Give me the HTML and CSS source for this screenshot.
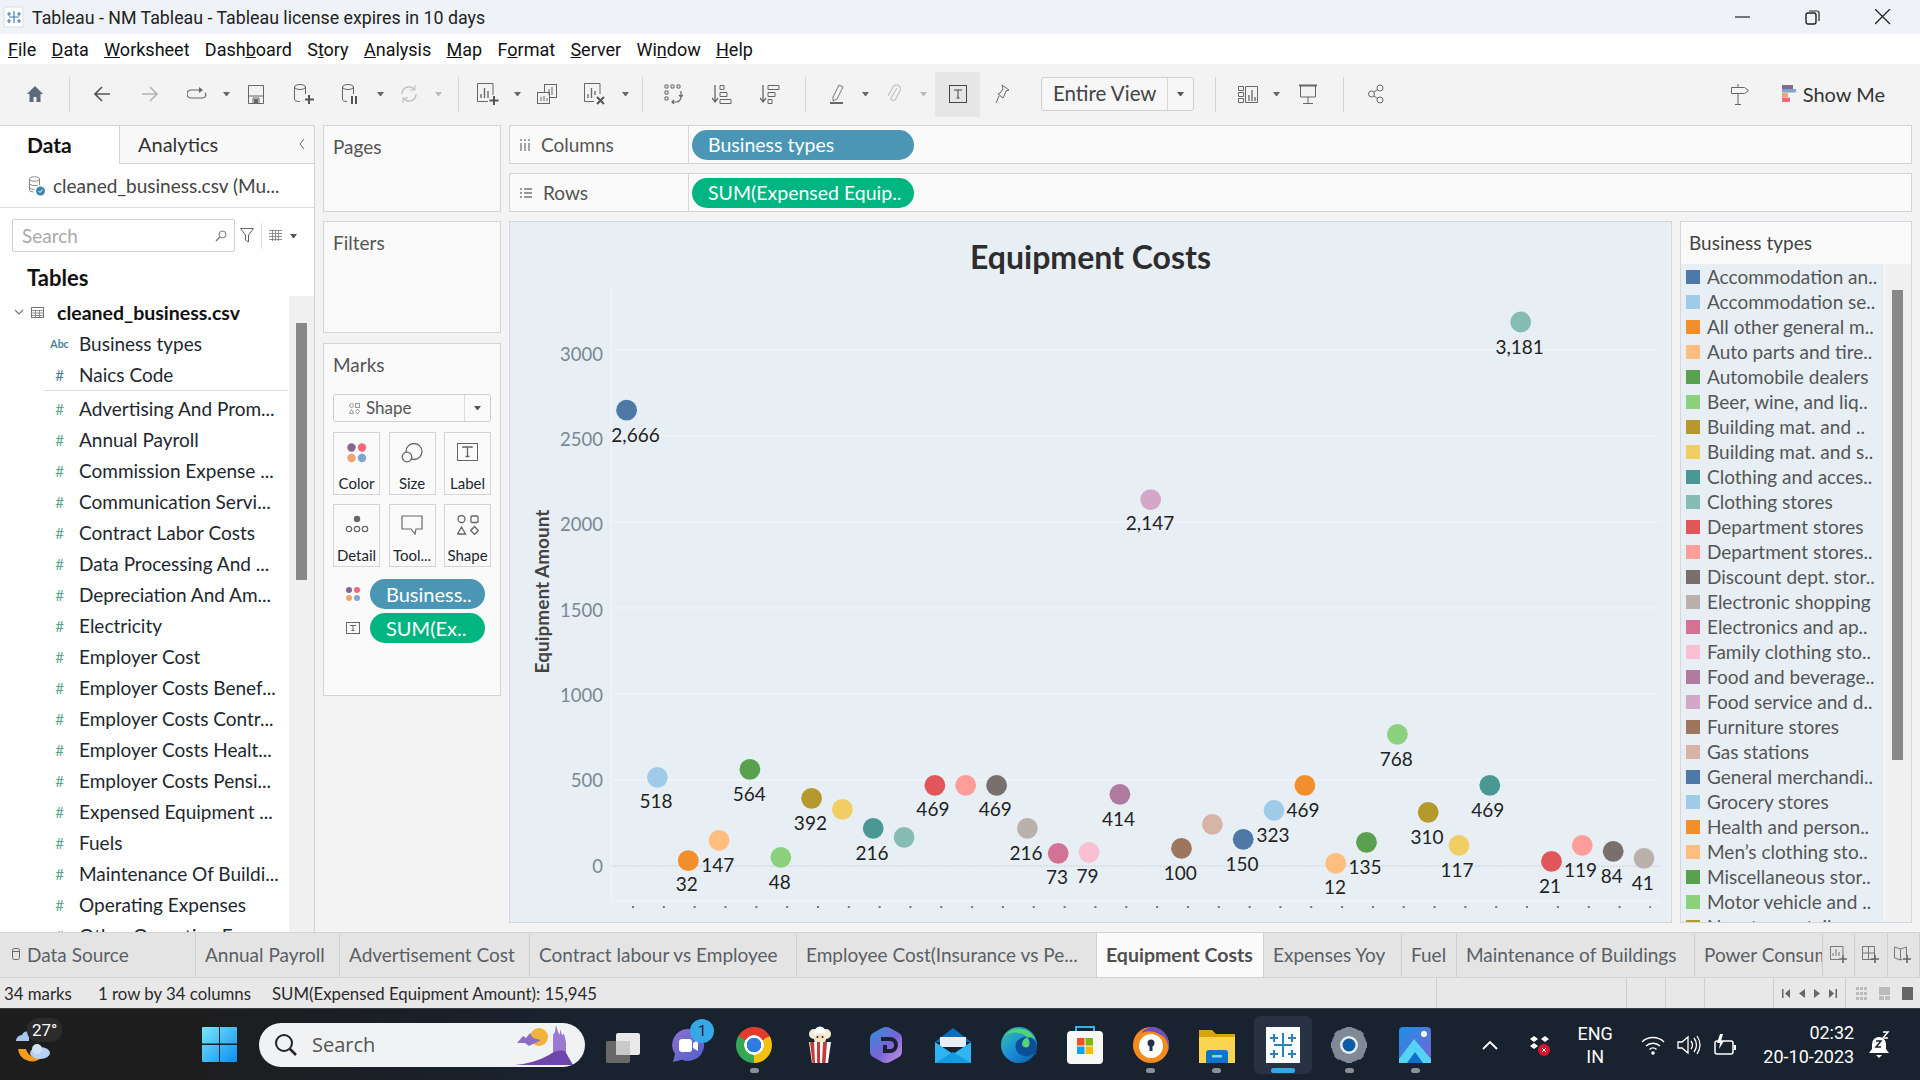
FILE: index.html
```html
<!DOCTYPE html>
<html lang="en">

<head>
    <meta charset="UTF-8">
    <title>Tableau - NM Tableau</title>
    <link rel="stylesheet" href="styles.css">
</head>

<body>
    <!-- window title -->
    <header class="titlebar">
        <svg class="app-logo" width="22" height="22" viewBox="0 0 22 22"><rect x="1" y="1" width="19" height="20" fill="#fff" stroke="#d8dde2"/><path d="M11 5v12M6 11h10M6 6v4M4 8h4M16 6v4M14 8h4M6 13v4M4 15h4M16 13v4M14 15h4" stroke="#3f7fb5" stroke-width="1.2" fill="none"/></svg>
        <span class="title-text">Tableau - NM Tableau - Tableau license expires in 10 days</span>
        <div class="win-controls">
            <svg width="16" height="16" viewBox="0 0 16 16"><path d="M0 8h15" stroke="#222" stroke-width="1.2"/></svg>
            <svg width="16" height="16" viewBox="0 0 16 16"><rect x="1" y="4" width="10" height="11" rx="2" fill="none" stroke="#222" stroke-width="1.4"/><path d="M4 2h8a2 2 0 0 1 2 2v8" fill="none" stroke="#222" stroke-width="1.2"/></svg>
            <svg width="16" height="16" viewBox="0 0 16 16"><path d="M0 0l15 15M15 0L0 15" stroke="#222" stroke-width="1.3"/></svg>
        </div>
    </header>

    <nav class="menubar">
        <span><u>F</u>ile</span>
        <span><u>D</u>ata</span>
        <span><u>W</u>orksheet</span>
        <span>Dash<u>b</u>oard</span>
        <span>S<u>t</u>ory</span>
        <span><u>A</u>nalysis</span>
        <span><u>M</u>ap</span>
        <span>F<u>o</u>rmat</span>
        <span><u>S</u>erver</span>
        <span>Wi<u>n</u>dow</span>
        <span><u>H</u>elp</span>
    </nav>

    <div class="toolbar">
        <span class="ti first"><svg width="18" height="18" viewBox="0 0 18 18"><path d="M9 1L1 9h2.500v8h4v-5h3v5h4V9H17z" fill="#5c6b78"/></svg></span>
        <i class="sep s1"></i>
        <span class="ti"><svg width="18" height="18" viewBox="0 0 18 18"><path d="M17 9H2M9 2L2 9l7 7" fill="none" stroke="#555" stroke-width="1.7"/></svg></span>
        <span class="ti"><svg width="18" height="18" viewBox="0 0 18 18"><path d="M1 9h15M9 2l7 7-7 7" fill="none" stroke="#b5b5b5" stroke-width="1.7"/></svg></span>
        <span class="ti cut"><svg width="20" height="14" viewBox="0 0 20 14"><path d="M14 3H4a3 3 0 0 0 0 8h12a3 3 0 0 0 2-5" fill="none" stroke="#666" stroke-width="1.2"/><path d="M12 0l4 3-4 3z" fill="#666"/></svg></span>
        <b class="caret"></b>
        <span class="ti"><svg width="16" height="19" viewBox="0 0 16 19"><path d="M.5.5h15v18H.5zM.5 11h15M5 18v-5h6v5" fill="none" stroke="#666"/><rect x="6" y="14" width="4" height="4" fill="#666"/></svg></span>
        <span class="ti"><svg width="22" height="22" viewBox="0 0 22 22"><ellipse cx="7" cy="4" rx="5.5" ry="2.5" fill="none" stroke="#666"/><path d="M1.5 4v12q0 2.500 5.500 2.500M12.500 4v7" fill="none" stroke="#666"/><path d="M16 12v9M12 16.500h9" stroke="#555" stroke-width="2"/></svg></span>
        <span class="ti cut"><svg width="20" height="22" viewBox="0 0 20 22"><ellipse cx="7" cy="4" rx="5.5" ry="2.5" fill="none" stroke="#666"/><path d="M1.5 4v12q0 2.500 4.500 2.500M12.500 4v7" fill="none" stroke="#666"/><path d="M11 13v8M15 13v8" stroke="#555" stroke-width="2"/></svg></span>
        <b class="caret"></b>
        <span class="ti cut"><svg width="18" height="18" viewBox="0 0 18 18"><path d="M2 9a7 7 0 0 1 12-5M16 9a7 7 0 0 1-12 5" fill="none" stroke="#bbb" stroke-width="1.3"/><path d="M15 0v5h-5M3 18v-5h5" fill="none" stroke="#bbb"/></svg></span>
        <b class="caret off"></b>
        <i class="sep s2"></i>
        <span class="ti cut"><svg width="22" height="22" viewBox="0 0 22 22"><path d="M16 12V.5H.5v18H11" fill="none" stroke="#666"/><path d="M4 15v-4M7.500 15V5M11 15V8" stroke="#666" stroke-width="1.3"/><path d="M17 13v9M12.500 17.500h9" stroke="#555" stroke-width="2"/></svg></span>
        <b class="caret"></b>
        <span class="ti"><svg width="20" height="20" viewBox="0 0 20 20"><rect x="7.5" y=".5" width="12" height="13" fill="none" stroke="#666"/><rect x=".5" y="8.5" width="12" height="11" fill="#f3f3f3" stroke="#666"/><path d="M12 11V5M15 11V3M4 17v-4M7 17v-5M10 17v-3" stroke="#666"/></svg></span>
        <span class="ti"><svg width="22" height="22" viewBox="0 0 22 22"><path d="M16 11V.5H.5v18H10" fill="none" stroke="#666"/><path d="M4 15v-4M7.500 15V5M11 12V8" stroke="#666" stroke-width="1.3"/><path d="M13 14l7 7M20 14l-7 7" stroke="#555" stroke-width="2"/></svg></span>
        <b class="caret"></b>
        <i class="sep s3"></i>
        <span class="ti"><svg width="20" height="20" viewBox="0 0 20 20"><path d="M1 1h3v3H1zM7 1h3v3H7zM13 1h3v3h-3zM1 7h3v3H1zM1 13h3v3H1z" fill="none" stroke="#666"/><path d="M17 7v6a5 5 0 0 1-5 5H8M15 11l2 2 2-2M10 16l-2 2 2 2" fill="none" stroke="#666" stroke-width="1.2"/></svg></span>
        <span class="ti"><svg width="20" height="20" viewBox="0 0 20 20"><path d="M3 1v17M0 14l3 4 3-4" fill="none" stroke="#666" stroke-width="1.3"/><path d="M8 1.500h4v4H8zM8 8.500h7v4H8zM8 15.500h11v4H8z" fill="none" stroke="#666"/></svg></span>
        <span class="ti"><svg width="20" height="20" viewBox="0 0 20 20"><path d="M3 1v17M0 14l3 4 3-4" fill="none" stroke="#666" stroke-width="1.3"/><path d="M8 1.500h11v4H8zM8 8.500h7v4H8zM8 15.500h4v4H8z" fill="none" stroke="#666"/></svg></span>
        <i class="sep s4"></i>
        <span class="ti narrow"><svg width="14" height="20" viewBox="0 0 14 20"><path d="M3 13L9 1l4 2-6 12-4 2z" fill="none" stroke="#777"/><rect y="18" width="13" height="2" fill="#666"/></svg></span>
        <b class="caret"></b>
        <span class="ti cut"><svg width="14" height="20" viewBox="0 0 14 20"><path d="M10 4L4 14a2.500 2.500 0 0 0 4 2l5-9a4 4 0 0 0-7-4L1 12" fill="none" stroke="#c2c2c2" stroke-width="1.2"/></svg></span>
        <b class="caret off"></b>
        <span class="ti active"><svg width="18" height="18" viewBox="0 0 18 18"><rect x=".5" y=".5" width="17" height="17" fill="none" stroke="#444"/><path d="M5 5h8M9 5v8M7.500 13h3" fill="none" stroke="#444"/></svg></span>
        <span class="ti pin"><svg width="15" height="20" viewBox="0 0 15 20"><path d="M7 1l7 5-3 1-2 5-1 2-5-4 2-1 3-4zM4 12l-3 7" fill="none" stroke="#666"/></svg></span>
        <div class="fit-select"><span>Entire View</span><b class="caret"></b></div>
        <i class="sep s5"></i>
        <span class="ti narrow"><svg width="20" height="17" viewBox="0 0 20 17"><path d="M.5.5h5v4h-5zM.5 6.500h5v4h-5zM.5 12.500h5v4h-5zM7.500.5h12v16h-12z" fill="none" stroke="#666"/><path d="M11 15V9M14 15V4M17 15v-4" stroke="#666" stroke-width="1.3"/></svg></span>
        <b class="caret"></b>
        <span class="ti present"><svg width="18" height="20" viewBox="0 0 18 20"><path d="M0 1.500h18" stroke="#666" stroke-width="2"/><path d="M1.500 2v11h15V2M9 13v6M4 19.500h10" fill="none" stroke="#666"/></svg></span>
        <i class="sep s6"></i>
        <span class="ti"><svg width="16" height="20" viewBox="0 0 16 20"><circle cx="3.5" cy="10" r="3" fill="none" stroke="#666"/><circle cx="12" cy="4" r="3" fill="none" stroke="#666"/><circle cx="12" cy="16" r="3" fill="none" stroke="#666"/><path d="M6 8l3.500-2.500M6 12l3.500 2.500" stroke="#666"/></svg></span>
        <span class="ti guide"><svg width="20" height="22" viewBox="0 0 20 22"><path d="M1.500 4.500h13l4 3-4 3h-13zM8 1v3M8 11v10M5 21.500h6" fill="none" stroke="#666"/></svg></span>
        <div class="show-me">
            <svg width="14" height="18" viewBox="0 0 14 18"><rect width="11" height="4" fill="#86688f"/><rect y="4" width="14" height="3.5" fill="#7ea6d2"/><rect y="8" width="6" height="4" fill="#f2a36f"/><rect y="12.5" width="8" height="4.5" fill="#f4687a"/></svg>
            <span>Show Me</span>
        </div>
    </div>

    <main class="workspace">
        <aside class="side">
            <div class="side-tabs">
                <span class="side-tab on">Data</span>
                <span class="side-tab">Analytics<svg class="collapse" width="6" height="10" viewBox="0 0 6 10"><path d="M5 0L1 5l4 5" fill="none" stroke="#666"/></svg></span>
            </div>
            <div class="source">
                <svg width="17" height="20" viewBox="0 0 17 20"><ellipse cx="6.5" cy="3" rx="5" ry="2.2" fill="none" stroke="#888"/><path d="M1.500 3v11q0 2 4 2M11.500 3v6M1.500 8q2 2 8 1.500M1.500 12q2 1.500 5 1.500" fill="none" stroke="#888"/><circle cx="12.5" cy="15" r="4.5" fill="#3c86ad"/><path d="M10.500 15l1.500 1.500 2.500-3" fill="none" stroke="#fff"/></svg>
                <span>cleaned_business.csv (Mu...</span>
            </div>
            <div class="search-row">
                <div class="search-box">
                    <span>Search</span>
                    <svg width="12" height="12" viewBox="0 0 12 12"><circle cx="7.5" cy="4.5" r="3.5" fill="none" stroke="#777"/><path d="M5 7l-4 4" stroke="#777" stroke-width="1.3"/></svg>
                </div>
                <svg class="funnel" width="14" height="15" viewBox="0 0 14 15"><path d="M.5.5h13L8.500 7v7l-3-2V7z" fill="none" stroke="#666"/></svg>
                <i class="mini-sep"></i>
                <svg width="13" height="11" viewBox="0 0 13 11"><path d="M0 .5h13M0 3.500h13M0 6.500h13M0 9.500h13M3.500 0v11M6.500 0v11M9.500 0v11" stroke="#777" stroke-width=".8" fill="none"/></svg>
                <b class="caret small"></b>
            </div>
            <h2 class="tables-head">Tables</h2>
            <div class="fields-wrap">
                <div class="fields">
                    <div class="table-row">
                        <svg width="10" height="6" viewBox="0 0 10 6"><path d="M1 1l4 4 4-4" fill="none" stroke="#777" stroke-width="1.2"/></svg>
                        <svg width="13" height="11" viewBox="0 0 13 11"><rect x=".5" y=".5" width="12" height="10" fill="none" stroke="#777"/><path d="M0 3.500h13M0 6h13M0 8.500h13M4.500 3v8M8.500 3v8" stroke="#777" stroke-width=".8"/></svg>
                        <span>cleaned_business.csv</span>
                    </div>
                    <div class="field dim"><em class="abc">Abc</em>Business types</div>
                    <div class="field dim"><em>#</em>Naics Code</div>
                    <hr class="field-sep">
                    <div class="field"><em>#</em>Advertising And Prom...</div>
                    <div class="field"><em>#</em>Annual Payroll</div>
                    <div class="field"><em>#</em>Commission Expense ...</div>
                    <div class="field"><em>#</em>Communication Servi...</div>
                    <div class="field"><em>#</em>Contract Labor Costs</div>
                    <div class="field"><em>#</em>Data Processing And ...</div>
                    <div class="field"><em>#</em>Depreciation And Am...</div>
                    <div class="field"><em>#</em>Electricity</div>
                    <div class="field"><em>#</em>Employer Cost</div>
                    <div class="field"><em>#</em>Employer Costs Benef...</div>
                    <div class="field"><em>#</em>Employer Costs Contr...</div>
                    <div class="field"><em>#</em>Employer Costs Healt...</div>
                    <div class="field"><em>#</em>Employer Costs Pensi...</div>
                    <div class="field"><em>#</em>Expensed Equipment ...</div>
                    <div class="field"><em>#</em>Fuels</div>
                    <div class="field"><em>#</em>Maintenance Of Buildi...</div>
                    <div class="field"><em>#</em>Operating Expenses</div>
                    <div class="field"><em>#</em>Other Operating E...</div>
                </div>
                <div class="track"><div class="thumb"></div></div>
            </div>
        </aside>

        <section class="cards">
            <div class="card pages"><h3>Pages</h3></div>
            <div class="card filters"><h3>Filters</h3></div>
            <div class="card marks">
                <h3>Marks</h3>
                <div class="mark-type">
                    <svg width="11" height="11" viewBox="0 0 11 11"><circle cx="2.5" cy="2.5" r="2" fill="none" stroke="#999"/><rect x="6.5" y=".5" width="4" height="4" fill="none" stroke="#999"/><path d="M2.500 6.500l2 4h-4zM8.500 6l2 2.500-2 2.500-2-2.500z" fill="none" stroke="#999"/></svg>
                    <span>Shape</span>
                    <b class="caret"></b>
                </div>
                <div class="mark-grid">
                    <div class="mark-btn">
                        <svg width="20" height="20" viewBox="0 0 20 20"><circle cx="4.5" cy="4.5" r="4.2" fill="#86688f"/><circle cx="15" cy="4.5" r="4.2" fill="#f4687a"/><circle cx="4.5" cy="15" r="4.2" fill="#f2a36f"/><circle cx="15" cy="15" r="4.2" fill="#7ea6d2"/></svg>
                        <span>Color</span>
                    </div>
                    <div class="mark-btn">
                        <svg width="22" height="20" viewBox="0 0 22 20"><circle cx="13" cy="8.5" r="8" fill="none" stroke="#666" stroke-width="1.3"/><circle cx="6" cy="14" r="4.8" fill="#fafafa" stroke="#666" stroke-width="1.3"/></svg>
                        <span>Size</span>
                    </div>
                    <div class="mark-btn">
                        <svg width="21" height="18" viewBox="0 0 21 18"><rect x=".5" y=".5" width="20" height="17" fill="none" stroke="#666"/><path d="M6 5V4h9v1M10.500 4v9M8.500 13.500h4" fill="none" stroke="#666" stroke-width="1.3"/></svg>
                        <span>Label</span>
                    </div>
                    <div class="mark-btn">
                        <svg width="24" height="20" viewBox="0 0 24 20"><circle cx="12" cy="4" r="3.2" fill="#666"/><circle cx="4" cy="14" r="2.7" fill="none" stroke="#666" stroke-width="1.2"/><circle cx="12" cy="14" r="2.7" fill="none" stroke="#666" stroke-width="1.2"/><circle cx="20" cy="14" r="2.7" fill="none" stroke="#666" stroke-width="1.2"/></svg>
                        <span>Detail</span>
                    </div>
                    <div class="mark-btn">
                        <svg width="22" height="20" viewBox="0 0 22 20"><path d="M1 1h20v13h-6l-1 5-4-5H1z" fill="none" stroke="#666" stroke-width="1.2"/></svg>
                        <span>Tool...</span>
                    </div>
                    <div class="mark-btn">
                        <svg width="22" height="20" viewBox="0 0 22 20"><circle cx="4.5" cy="4" r="3.5" fill="none" stroke="#666" stroke-width="1.3"/><rect x="14" y="1" width="7" height="6.5" rx="1" fill="none" stroke="#666" stroke-width="1.3"/><path d="M4.500 12l4 7h-8zM17.500 11.500l3.800 4-3.800 4-3.800-4z" fill="none" stroke="#666" stroke-width="1.3"/></svg>
                        <span>Shape</span>
                    </div>
                </div>
                <div class="mark-pill-row">
                    <svg width="14" height="14" viewBox="0 0 14 14"><circle cx="3" cy="3" r="3" fill="#86688f"/><circle cx="11" cy="3" r="3" fill="#f4687a"/><circle cx="3" cy="11" r="3" fill="#f2a36f"/><circle cx="11" cy="11" r="3" fill="#7ea6d2"/></svg>
                    <span class="pill blue">Business..</span>
                </div>
                <div class="mark-pill-row">
                    <svg width="14" height="12" viewBox="0 0 14 12"><rect x=".5" y=".5" width="13" height="11" fill="none" stroke="#666"/><path d="M4 3.500h6M7 3.500v5M5.500 8.500h3" fill="none" stroke="#666"/></svg>
                    <span class="pill green">SUM(Ex..</span>
                </div>
            </div>
        </section>

        <section class="stage">
            <div class="shelf">
                <div class="shelf-label"><svg width="10" height="12" viewBox="0 0 10 12"><path d="M1 0v2M5 0v2M9 0v2M1 4v8M5 4v8M9 4v8" stroke="#777" stroke-width="1.3"/></svg><span>Columns</span></div>
                <span class="pill blue wide">Business types</span>
            </div>
            <div class="shelf">
                <div class="shelf-label"><svg width="12" height="10" viewBox="0 0 12 10"><path d="M0 1h2M4 1h8M0 5h2M4 5h8M0 9h2M4 9h8" stroke="#777" stroke-width="1.3"/></svg><span>Rows</span></div>
                <span class="pill green wide">SUM(Expensed Equip..</span>
            </div>
            <div class="view-row">
                <div class="viz">
                    <svg class="chart" width="1163" height="702" viewBox="509 221 1163 702">
                        <text class="chart-title" x="1090.5" y="269" text-anchor="middle">Equipment Costs</text>

                        <path class="grid" d="M611.4 350H1660M611.4 436H1660M611.4 522H1660M611.4 608H1660M611.4 694H1660M611.4 780H1660M611.4 285V901H1660"/>
                        <path class="zero" d="M611.4 866H1660"/>
                        <line class="ticks" x1="611" y1="902.5" x2="1661" y2="902.5"/>
                        <line class="header-dots" x1="631" y1="907" x2="1651" y2="907"/>

                        <text class="axis" x="603" y="361" text-anchor="end">3000</text>
                        <text class="axis" x="603" y="446" text-anchor="end">2500</text>
                        <text class="axis" x="603" y="531" text-anchor="end">2000</text>
                        <text class="axis" x="603" y="617" text-anchor="end">1500</text>
                        <text class="axis" x="603" y="702" text-anchor="end">1000</text>
                        <text class="axis" x="603" y="787" text-anchor="end">500</text>
                        <text class="axis" x="603" y="873" text-anchor="end">0</text>
                        <text class="axis-title" transform="translate(549 591.5) rotate(-90)" text-anchor="middle">Equipment Amount</text>

                        <circle class="c0" cx="626.6" cy="410.2" r="10.4"/>
                        <circle class="c1" cx="657.4" cy="777.3" r="10.4"/>
                        <circle class="c2" cx="688.3" cy="860.7" r="10.4"/>
                        <circle class="c3" cx="719.1" cy="840.3" r="10.4"/>
                        <circle class="c4" cx="749.9" cy="769.3" r="10.4"/>
                        <circle class="c5" cx="780.8" cy="857.3" r="10.4"/>
                        <circle class="c6" cx="811.6" cy="798.3" r="10.4"/>
                        <circle class="c7" cx="842.4" cy="809.3" r="10.4"/>
                        <circle class="c8" cx="873.2" cy="828.3" r="10.4"/>
                        <circle class="c9" cx="904.1" cy="837.3" r="10.4"/>
                        <circle class="c10" cx="934.9" cy="785.3" r="10.4"/>
                        <circle class="c11" cx="965.7" cy="785.3" r="10.4"/>
                        <circle class="c12" cx="996.6" cy="785.3" r="10.4"/>
                        <circle class="c13" cx="1027.4" cy="828.3" r="10.4"/>
                        <circle class="c14" cx="1058.2" cy="853.3" r="10.4"/>
                        <circle class="c15" cx="1089.1" cy="852.3" r="10.4"/>
                        <circle class="c16" cx="1119.9" cy="794.3" r="10.4"/>
                        <circle class="c17" cx="1150.7" cy="499.6" r="10.4"/>
                        <circle class="c18" cx="1181.5" cy="848.3" r="10.4"/>
                        <circle class="c19" cx="1212.4" cy="824.3" r="10.4"/>
                        <circle class="c0" cx="1243.2" cy="839.3" r="10.4"/>
                        <circle class="c1" cx="1274" cy="810.3" r="10.4"/>
                        <circle class="c2" cx="1304.9" cy="785.3" r="10.4"/>
                        <circle class="c3" cx="1335.7" cy="863.3" r="10.4"/>
                        <circle class="c4" cx="1366.5" cy="842.3" r="10.4"/>
                        <circle class="c5" cx="1397.4" cy="734.3" r="10.4"/>
                        <circle class="c6" cx="1428.2" cy="812.3" r="10.4"/>
                        <circle class="c7" cx="1459" cy="845.3" r="10.4"/>
                        <circle class="c8" cx="1489.8" cy="785.3" r="10.4"/>
                        <circle class="c9" cx="1520.7" cy="322" r="10.4"/>
                        <circle class="c10" cx="1551.5" cy="861.3" r="10.4"/>
                        <circle class="c11" cx="1582.3" cy="845.3" r="10.4"/>
                        <circle class="c12" cx="1613.2" cy="851.3" r="10.4"/>
                        <circle class="c13" cx="1644" cy="858.3" r="10.4"/>

                        <g class="mark-labels" text-anchor="middle">
                            <text x="635.5" y="442">2,666</text>
                            <text x="656" y="808">518</text>
                            <text x="686.8" y="891">32</text>
                            <text x="717.8" y="872">147</text>
                            <text x="749.2" y="801">564</text>
                            <text x="779.8" y="889">48</text>
                            <text x="810.4" y="830">392</text>
                            <text x="872" y="860">216</text>
                            <text x="932.9" y="816">469</text>
                            <text x="995.3" y="816">469</text>
                            <text x="1026" y="860">216</text>
                            <text x="1056.9" y="884">73</text>
                            <text x="1087.5" y="883">79</text>
                            <text x="1118.5" y="826">414</text>
                            <text x="1150" y="530">2,147</text>
                            <text x="1180.3" y="880">100</text>
                            <text x="1242" y="871">150</text>
                            <text x="1273" y="842">323</text>
                            <text x="1303" y="817">469</text>
                            <text x="1335" y="894">12</text>
                            <text x="1365" y="874">135</text>
                            <text x="1396.3" y="766">768</text>
                            <text x="1427" y="844">310</text>
                            <text x="1457" y="877">117</text>
                            <text x="1487.7" y="817">469</text>
                            <text x="1519.6" y="354">3,181</text>
                            <text x="1549.9" y="893">21</text>
                            <text x="1580.6" y="877">119</text>
                            <text x="1611.7" y="883">84</text>
                            <text x="1642.7" y="890">41</text>
                        </g>
                    </svg>
                </div>
                <div class="legend">
                    <h3>Business types</h3>
                    <div class="legend-body">
                        <ul class="legend-list">
                            <li><i class="c0"></i>Accommodation an..</li>
                            <li><i class="c1"></i>Accommodation se..</li>
                            <li><i class="c2"></i>All other general m..</li>
                            <li><i class="c3"></i>Auto parts and tire..</li>
                            <li><i class="c4"></i>Automobile dealers</li>
                            <li><i class="c5"></i>Beer, wine, and liq..</li>
                            <li><i class="c6"></i>Building mat. and ..</li>
                            <li><i class="c7"></i>Building mat. and s..</li>
                            <li><i class="c8"></i>Clothing and acces..</li>
                            <li><i class="c9"></i>Clothing stores</li>
                            <li><i class="c10"></i>Department stores</li>
                            <li><i class="c11"></i>Department stores..</li>
                            <li><i class="c12"></i>Discount dept. stor..</li>
                            <li><i class="c13"></i>Electronic shopping</li>
                            <li><i class="c14"></i>Electronics and ap..</li>
                            <li><i class="c15"></i>Family clothing sto..</li>
                            <li><i class="c16"></i>Food and beverage..</li>
                            <li><i class="c17"></i>Food service and d..</li>
                            <li><i class="c18"></i>Furniture stores</li>
                            <li><i class="c19"></i>Gas stations</li>
                            <li><i class="c0"></i>General merchandi..</li>
                            <li><i class="c1"></i>Grocery stores</li>
                            <li><i class="c2"></i>Health and person..</li>
                            <li><i class="c3"></i>Men’s clothing sto..</li>
                            <li><i class="c4"></i>Miscellaneous stor..</li>
                            <li><i class="c5"></i>Motor vehicle and ..</li>
                            <li><i class="c6"></i>Nonstore retailers</li>
                        </ul>
                        <div class="legend-track"><div class="legend-thumb"></div></div>
                    </div>
                </div>
            </div>
        </section>
    </main>

    <div class="tabbar">
        <span class="tab ds"><svg width="8" height="12" viewBox="0 0 8 12"><rect x=".5" y=".5" width="7" height="11" rx="2" fill="none" stroke="#666"/><path d="M1 3.500h6" stroke="#666"/></svg>Data Source</span>
        <span class="tab t1">Annual Payroll</span>
        <span class="tab t2">Advertisement Cost</span>
        <span class="tab t3">Contract labour vs Employee</span>
        <span class="tab t4">Employee Cost(Insurance vs Pe...</span>
        <span class="tab t5 on">Equipment Costs</span>
        <span class="tab t6">Expenses Yoy</span>
        <span class="tab t7">Fuel</span>
        <span class="tab t8">Maintenance of Buildings</span>
        <span class="tab t9">Power Consumption</span>
        <span class="tab-add"><svg width="18" height="18" viewBox="0 0 18 18"><path d="M13 9V.5H.5v13H9M3 10V7M6 10V3M9 10V6" fill="none" stroke="#777"/><path d="M13 9v8M9 13h8" stroke="#666" stroke-width="1.6"/></svg></span>
        <span class="tab-add"><svg width="18" height="18" viewBox="0 0 18 18"><path d="M.5.5h12v13H.5zM.5 7h12M6.500.5v13" fill="none" stroke="#777"/><path d="M13 9v8M9 13h8" stroke="#666" stroke-width="1.6"/></svg></span>
        <span class="tab-add"><svg width="18" height="18" viewBox="0 0 18 18"><path d="M.5 1l6 2v11l-6-2zM6.500 3l6-2v9M6.500 14l2-.7" fill="none" stroke="#777"/><path d="M13 9v8M9 13h8" stroke="#666" stroke-width="1.6"/></svg></span>
    </div>

    <footer class="statusbar">
        <span class="st-marks">34 marks</span>
        <span class="st-dims">1 row by 34 columns</span>
        <span class="st-sum">SUM(Expensed Equipment Amount): 15,945</span>
        <i class="st-cell c-a"></i>
        <i class="st-cell c-b"></i>
        <i class="st-cell c-c"></i>
        <i class="st-cell c-d"></i>
        <i class="st-cell"></i>
        <div class="st-nav">
            <svg width="8" height="9" viewBox="0 0 8 9"><path d="M8 0v9L3 4.500zM0 0h1.500v9H0z" fill="#666"/></svg>
            <svg width="6" height="9" viewBox="0 0 6 9"><path d="M6 0v9L0 4.500z" fill="#666"/></svg>
            <svg width="6" height="9" viewBox="0 0 6 9"><path d="M0 0v9l6-4.500z" fill="#666"/></svg>
            <svg width="8" height="9" viewBox="0 0 8 9"><path d="M0 0v9l5-4.500zM6.500 0H8v9H6.500z" fill="#666"/></svg>
        </div>
        <i class="st-cell"></i>
        <div class="st-views">
            <svg width="11" height="13" viewBox="0 0 11 13"><path d="M0 0h3v3H0zM4 0h3v3H4zM8 0h3v3H8zM0 5h3v3H0zM4 5h3v3H4zM8 5h3v3H8zM0 10h3v3H0zM4 10h3v3H4zM8 10h3v3H8z" fill="#bbb"/></svg>
            <svg width="11" height="13" viewBox="0 0 11 13"><path d="M0 0h11v8H0zM0 9h5v4H0zM6 9h5v4H6z" fill="#bbb"/></svg>
            <svg width="11" height="13" viewBox="0 0 11 13"><rect width="11" height="13" fill="#666"/></svg>
        </div>
    </footer>

    <div class="taskbar">
        <div class="weather">
            <svg width="38" height="38" viewBox="0 0 38 38">
                <path d="M2 14a6 6 0 0 1 6-6q2-5 7-3v9z" fill="#a7c8f0"/>
                <path d="M4 22a14 14 0 0 0 24 8 12 12 0 0 1-16-8z" fill="#f59a1d"/>
                <ellipse cx="26" cy="26" rx="10" ry="6" fill="#b6d2f2"/>
                <circle cx="23" cy="22" r="5" fill="#cfe2f8"/>
            </svg>
            <span class="temp">27°</span>
        </div>
        <svg class="win-logo" width="35" height="35" viewBox="0 0 35 35">
            <defs><linearGradient id="winfill" x1="0" y1="0" x2="1" y2="1"><stop offset="0" stop-color="#7ae5fb"/><stop offset="1" stop-color="#0b8df0"/></linearGradient></defs>
            <path d="M1 0h16v16.500H0V1a1 1 0 0 1 1-1zM18 0h16a1 1 0 0 1 1 1v15.500H18zM0 18h17v17H1a1 1 0 0 1-1-1zM18 18h17v16a1 1 0 0 1-1 1H18z" fill="url(#winfill)"/>
        </svg>
        <div class="task-search">
            <svg width="24" height="24" viewBox="0 0 24 24"><circle cx="10" cy="10" r="8" fill="none" stroke="#222" stroke-width="2"/><path d="M16 16l6 6" stroke="#222" stroke-width="2.5"/></svg>
            <span>Search</span>
            <svg class="castle" width="60" height="44" viewBox="0 0 60 44">
                <circle cx="24" cy="14" r="9" fill="#f2b23e"/>
                <path d="M2 20l6-7 3 2 4-5 3 5 8 2-6 3-6 3-4-3z" fill="#8b6fc4"/>
                <path d="M38 30V12l2-3 1-7 2 7 2 3V6l2 6 2-1 2 8v12z" fill="#9a7ad0"/>
                <path d="M0 42q20-2 34-10 8-6 16-4l8 14z" fill="#6f46ad"/>
            </svg>
        </div>
        <div class="apps">
            <span class="app"><svg width="36" height="36" viewBox="0 0 36 36"><rect x="12" y="6" width="24" height="22" rx="2" fill="#e9e9e9"/><rect x="2" y="14" width="24" height="22" rx="2" fill="#6d6d6d" opacity=".95"/><rect x="12" y="14" width="14" height="14" fill="#c9c9c9"/></svg></span>
            <span class="app"><svg width="36" height="36" viewBox="0 0 36 36"><defs><linearGradient id="meet" x1="0" y1="0" x2="1" y2="1"><stop offset="0" stop-color="#8e72cf"/><stop offset="1" stop-color="#4d5fc9"/></linearGradient></defs><path d="M18 2a16 16 0 1 1-6 30.800L3 35l2-8A16 16 0 0 1 18 2z" fill="url(#meet)"/><rect x="9" y="12" width="13" height="13" rx="3" fill="#fff"/><path d="M23 16l5-3v11l-5-3z" fill="#fff"/></svg><b class="badge">1</b></span>
            <span class="app"><span class="chrome"></span><i class="dot"></i></span>
            <span class="app"><svg width="28" height="38" viewBox="0 0 28 38"><circle cx="8" cy="8" r="5" fill="#f5ecd8"/><circle cx="20" cy="8" r="5" fill="#f5ecd8"/><circle cx="14" cy="6" r="5.5" fill="#fff"/><circle cx="14" cy="13" r="6" fill="#f4e4c4"/><circle cx="11.5" cy="11" r="1" fill="#222"/><circle cx="16.5" cy="11" r="1" fill="#222"/><path d="M3 16h22l-3 21H6z" fill="#fff"/><path d="M4 16h4l1 21H6.500zM11 16h3v21h-3zM17 16h4l-1.500 21H16z" fill="#c73a3a"/></svg></span>
            <span class="app"><svg width="32" height="38" viewBox="0 0 32 38"><defs><linearGradient id="cop" x1="0" y1="0" x2="1" y2="1"><stop offset="0" stop-color="#2f8fd8"/><stop offset=".55" stop-color="#7a63d8"/><stop offset="1" stop-color="#c79be8"/></linearGradient></defs><path d="M12 2q4-2 8 0l9 5q3 2 3 6v12q0 4-3 6l-9 5q-4 2-8 0l-9-5q-3-2-3-6V13q0-4 3-6z" fill="url(#cop)"/><path d="M11 13h9a5 5 0 0 1 0 12h-5v-6" fill="none" stroke="#19222f" stroke-width="4"/></svg></span>
            <span class="app"><svg width="36" height="36" viewBox="0 0 36 36"><path d="M18 1L0 15h36z" fill="#0a6dc2"/><path d="M5 10h26v10H5z" fill="#e8eef5"/><path d="M0 15l18 12 18-12v21H0z" fill="#2fb6f2"/><path d="M0 36l18-11 18 11z" fill="#149ae0"/></svg></span>
            <span class="app"><svg width="36" height="36" viewBox="0 0 36 36"><defs><linearGradient id="edge" x1="0" y1="0" x2="1" y2="1"><stop offset="0" stop-color="#35c4a8"/><stop offset=".5" stop-color="#1a8fd8"/><stop offset="1" stop-color="#0c59a4"/></linearGradient></defs><circle cx="18" cy="18" r="18" fill="url(#edge)"/><path d="M36 19a11 10 0 0 0-21-3c-2 6 2 12 8 13a12 12 0 0 0 9-2l3 1" fill="#0c4f96"/><path d="M36 18A18 18 0 0 0 3 10q8-7 18-3c8 3 9 10 6 13-2 1-6 0-6-3a7 7 0 0 1 15 1z" fill="#55d56f"/></svg></span>
            <span class="app"><svg width="36" height="38" viewBox="0 0 36 38"><path d="M9 5V1h18v4" fill="none" stroke="#2cb5ea" stroke-width="2"/><rect y="5" width="36" height="33" rx="4" fill="#f7f7f7"/><rect x="10" y="12" width="7.5" height="7.5" fill="#f25022"/><rect x="18.5" y="12" width="7.5" height="7.5" fill="#7fba00"/><rect x="10" y="20.5" width="7.5" height="7.5" fill="#00a4ef"/><rect x="18.5" y="20.5" width="7.5" height="7.5" fill="#ffb900"/></svg></span>
            <span class="app"><svg width="36" height="36" viewBox="0 0 36 36"><circle cx="18" cy="18" r="18" fill="#f58a1f"/><path d="M18 0a18 18 0 0 1 18 18 18 18 0 0 1-6 13 14 14 0 0 0-4-24Q18 2 8 6A18 18 0 0 1 18 0z" fill="#6d4fc0"/><circle cx="18" cy="19" r="12" fill="#fff"/><circle cx="18" cy="16" r="3.5" fill="#22304a"/><path d="M16.500 17h3v7h-3z" fill="#22304a"/></svg><i class="dot"></i></span>
            <span class="app"><svg width="36" height="36" viewBox="0 0 36 36"><path d="M0 3h13l4 4h19v29H0z" fill="#d9a40e"/><rect y="10" width="36" height="26" fill="#fbd54e"/><path d="M7 36V26q0-3 3-3h16q3 0 3 3v10z" fill="#0b75c9"/><rect x="13" y="28" width="10" height="2.5" fill="#8fd0ff"/></svg><i class="dot"></i></span>
            <span class="app current"><svg width="34" height="36" viewBox="0 0 34 36"><rect width="34" height="36" fill="#f9fbfc"/><path d="M17 6v24M8 18h18M8 7v8M4 11h8M26 7v8M22 11h8M8 23v8M4 27h8M26 23v8M22 27h8" stroke="#2f7fb8" stroke-width="2"/></svg><i class="dash"></i></span>
            <span class="app"><svg width="36" height="36" viewBox="0 0 36 36"><circle cx="18" cy="18" r="13" fill="none" stroke="#7f8a96" stroke-width="9"/><path d="M18 0v6M18 30v6M0 18h6M30 18h6M5 5l5 5M26 26l5 5M31 5l-5 5M10 26l-5 5" stroke="#7f8a96" stroke-width="6"/><circle cx="18" cy="18" r="9" fill="#e8edf2"/><circle cx="18" cy="18" r="6.5" fill="#0f5aa5"/></svg><i class="dot"></i></span>
            <span class="app"><svg width="32" height="36" viewBox="0 0 32 36"><defs><linearGradient id="photo" x1="0" y1="0" x2="1" y2="1"><stop offset="0" stop-color="#1c90e6"/><stop offset="1" stop-color="#7a62d4"/></linearGradient></defs><rect width="32" height="36" rx="4" fill="url(#photo)"/><circle cx="25" cy="7" r="3" fill="#fff"/><path d="M0 32l15-20 17 20v4H0z" fill="#55d3f5"/><path d="M8 36l8-11 8 11z" fill="#0f6fc9"/></svg><i class="dot"></i></span>
        </div>
        <div class="tray">
            <svg class="tray-up" width="16" height="10" viewBox="0 0 16 10"><path d="M1 9l7-7 7 7" fill="none" stroke="#fff" stroke-width="1.8"/></svg>
            <svg class="tray-drop" width="22" height="24" viewBox="0 0 22 24"><path d="M5 3l4 3-4 3-4-3zM16 3l4 3-4 3-4-3zM5 10l4 3-4 3-4-3z" fill="#fff"/><circle cx="15" cy="17" r="6" fill="#d3172c"/><path d="M13 15l4 4M17 15l-4 4" stroke="#fff"/></svg>
            <div class="lang"><span>ENG</span><span>IN</span></div>
            <svg width="24" height="20" viewBox="0 0 24 20"><path d="M1 7a16 16 0 0 1 22 0M5 11a10 10 0 0 1 14 0M8.500 14.500a5 5 0 0 1 7 0" fill="none" stroke="#fff" stroke-width="1.5"/><circle cx="12" cy="18" r="1.8" fill="#fff"/></svg>
            <svg width="24" height="22" viewBox="0 0 24 22"><path d="M1 8h4l6-5v16l-6-5H1zM14 7q3 4 0 8M17 4q5 7 0 14M20 2q6 9 0 18" fill="none" stroke="#fff" stroke-width="1.3"/></svg>
            <svg width="24" height="24" viewBox="0 0 24 24"><rect x="2" y="8" width="18" height="13" rx="2" fill="none" stroke="#fff" stroke-width="1.5"/><path d="M21 12h2v5h-2z" fill="#fff"/><path d="M7 1L4 10h3l-1 6 5-8H8l2-7z" fill="#fff"/></svg>
            <div class="clock"><span>02:32</span><span>20-10-2023</span></div>
            <svg class="bell" width="22" height="28" viewBox="0 0 22 28"><path d="M11 6a7 7 0 0 0-7 7v5l-3 4h20l-3-4v-5a7 7 0 0 0-7-7z" fill="#fff"/><path d="M8 24h6l-3 3z" fill="#fff"/><path d="M8 10h5l-5 6h5" fill="none" stroke="#19222f" stroke-width="1.5"/><path d="M15 1h5l-5 6h5" fill="none" stroke="#fff" stroke-width="1.5"/></svg>
        </div>
    </div>
</body>

</html>
```

FILE: styles.css
```css
* {
    box-sizing: border-box;
}

html,
body {
    margin: 0;
    height: 100%;
}

body {
    display: flex;
    flex-direction: column;
    height: 1080px;
    overflow: hidden;
    font-family: "Lato", "Open Sans", sans-serif;
    font-size: 19px;
    color: #333;
    background-color: #f3f3f3;
}

h2,
h3 {
    margin: 0;
    font-weight: normal;
}

svg {
    flex: none;
    display: block;
}

/* tableau 20 palette, shared by marks and legend */
.c0 { fill: #4e79a7; background-color: #4e79a7; }
.c1 { fill: #a0cbe8; background-color: #a0cbe8; }
.c2 { fill: #f28e2b; background-color: #f28e2b; }
.c3 { fill: #ffbe7d; background-color: #ffbe7d; }
.c4 { fill: #59a14f; background-color: #59a14f; }
.c5 { fill: #8cd17d; background-color: #8cd17d; }
.c6 { fill: #b6992d; background-color: #b6992d; }
.c7 { fill: #f1ce63; background-color: #f1ce63; }
.c8 { fill: #499894; background-color: #499894; }
.c9 { fill: #86bcb6; background-color: #86bcb6; }
.c10 { fill: #e15759; background-color: #e15759; }
.c11 { fill: #ff9d9a; background-color: #ff9d9a; }
.c12 { fill: #79706e; background-color: #79706e; }
.c13 { fill: #bab0ac; background-color: #bab0ac; }
.c14 { fill: #d37295; background-color: #d37295; }
.c15 { fill: #fabfd2; background-color: #fabfd2; }
.c16 { fill: #b07aa1; background-color: #b07aa1; }
.c17 { fill: #d4a6c8; background-color: #d4a6c8; }
.c18 { fill: #9d7660; background-color: #9d7660; }
.c19 { fill: #d7b5a6; background-color: #d7b5a6; }

/* window chrome */
.titlebar {
    flex: none;
    display: flex;
    align-items: center;
    height: 34px;
    padding-left: 3px;
    background-color: #eff3f7;
    font-family: "Roboto", sans-serif;
    font-size: 17.8px;
    color: #222;
}

.title-text {
    margin-left: 7px;
}

.win-controls {
    display: flex;
    gap: 54px;
    margin-left: auto;
    padding-right: 29px;
}

.menubar {
    flex: none;
    display: flex;
    gap: 15.3px;
    align-items: center;
    height: 30px;
    padding-left: 8px;
    background-color: #fff;
    font-family: "Roboto", sans-serif;
    font-size: 18px;
    color: #111;
}

/* toolbar */
.toolbar {
    flex: none;
    display: flex;
    align-items: center;
    height: 61px;
    padding-bottom: 1px;
    background-color: #f3f3f3;
}

.ti {
    flex: none;
    display: flex;
    align-items: center;
    justify-content: center;
    width: 48px;
    height: 45px;
}

.ti.first { margin-left: 11px; }
.ti.cut { width: 46px; }
.ti.narrow { width: 44px; }
.ti.pin { width: 44px; }
.ti.present { margin-left: 2px; }

.ti.active {
    width: 45px;
    margin-left: 6px;
    background-color: #e6e6e6;
}

.ti.guide {
    margin-left: auto;
    margin-right: 18px;
}

.caret {
    flex: none;
    display: block;
    width: 7px;
    height: 0;
    margin: 0 2.5px;
    border-top: 4px solid #666;
    border-left: 3.5px solid transparent;
    border-right: 3.5px solid transparent;
}

.caret.off { border-top-color: #bbb; }

.sep {
    flex: none;
    width: 1px;
    height: 35px;
    background-color: #d4d4d4;
}

.s1 { margin: 0 8px 0 10px; }
.s2 { margin: 0 6px 0 14px; }
.s3 { margin: 0 7px 0 11px; }
.s4 { margin: 0 9px 0 11px; }
.s5 { margin: 0 10px 0 21px; }
.s6 { margin: 0 8px 0 11px; }

.fit-select {
    flex: none;
    display: flex;
    align-items: center;
    width: 153px;
    height: 34px;
    margin-left: 17px;
    padding-left: 11px;
    background-color: #f7f7f7;
    border: 1px solid #cfcfcf;
    border-radius: 3px;
    font-size: 20.5px;
    color: #444;
}

.fit-select span {
    flex: 1;
    height: 100%;
    line-height: 31px;
    border-right: 1px solid #d8d8d8;
}

.fit-select .caret {
    margin: 0 9px;
    border-top-color: #555;
}

.show-me {
    display: flex;
    align-items: center;
    gap: 7px;
    padding-right: 35px;
    font-size: 20px;
    color: #333;
}

/* main area */
.workspace {
    flex: 1;
    display: flex;
    min-height: 0;
}

.side {
    flex: none;
    display: flex;
    flex-direction: column;
    width: 315px;
    height: 807px;
    background-color: #fff;
    border-right: 1px solid #d4d4d4;
}

.side-tabs {
    flex: none;
    display: flex;
    height: 39px;
    border-top: 1px solid #d4d4d4;
}

.side-tab {
    display: flex;
    align-items: center;
    flex: 1;
    padding: 0 0 2px 18px;
    background-color: #f9f9f9;
    border-left: 1px solid #d4d4d4;
    border-bottom: 1px solid #d4d4d4;
    font-size: 20px;
    color: #333;
}

.side-tab.on {
    flex: none;
    width: 119px;
    padding-left: 27px;
    background-color: #fff;
    border: 0;
    font-size: 21px;
    font-weight: bold;
    color: #111;
}

.collapse {
    margin-left: auto;
    margin-right: 9px;
}

.source {
    flex: none;
    display: flex;
    align-items: center;
    gap: 8px;
    height: 44px;
    padding-left: 28px;
    border-bottom: 1px solid #dedede;
    color: #444;
}

.search-row {
    flex: none;
    display: flex;
    align-items: center;
    height: 33px;
    margin-top: 11px;
    padding-left: 12px;
}

.search-box {
    display: flex;
    align-items: center;
    justify-content: space-between;
    width: 223px;
    height: 33px;
    padding: 0 7px 0 9px;
    border: 1px solid #cfcfcf;
    border-radius: 2px;
    color: #a8a8a8;
}

.funnel {
    margin-left: 5px;
}

.mini-sep {
    width: 1px;
    height: 26px;
    margin: 0 7px;
    background-color: #ddd;
}

.caret.small {
    margin-left: 8px;
    border-top-color: #555;
}

.tables-head {
    flex: none;
    height: 34px;
    margin-top: 9px;
    padding-left: 27px;
    line-height: 34px;
    font-size: 22px;
    font-weight: bold;
    color: #111;
}

.fields-wrap {
    flex: 1;
    display: flex;
    min-height: 0;
    margin-top: 1px;
    overflow: hidden;
}

.fields {
    flex: none;
    width: 289px;
    overflow: hidden;
}

.table-row {
    display: flex;
    align-items: center;
    height: 32px;
    padding-left: 14px;
    font-size: 19.5px;
    font-weight: bold;
    color: #111;
}

.table-row svg + svg {
    margin-left: 7px;
}

.table-row span {
    margin-left: 13px;
}

.field {
    display: flex;
    align-items: center;
    height: 31px;
    padding-left: 44px;
    white-space: nowrap;
    color: #1d2730;
}

.field em {
    width: 35px;
    padding: 0 6px 0 2px;
    text-align: center;
    font-style: normal;
    font-size: 15px;
    color: #5aa78e;
}

.field.dim em {
    color: #4b7d9b;
}

.field em.abc {
    font-size: 10.5px;
    font-weight: bold;
}

.field-sep {
    height: 1px;
    margin: 0 1px 2px 44px;
    border: 0;
    background-color: #dedede;
}

.track {
    flex: none;
    width: 25px;
    background-color: #f0f0f0;
}

.thumb {
    width: 11px;
    height: 257px;
    margin: 27px 0 0 7px;
    background-color: #888;
}

/* pages, filters, marks */
.cards {
    flex: none;
    display: flex;
    flex-direction: column;
    width: 178px;
    margin-left: 8px;
}

.card {
    flex: none;
    padding: 0 9px;
    background-color: #fafafa;
    border: 1px solid #d4d4d4;
}

.card h3 {
    font-size: 19px;
    line-height: 41px;
    color: #555;
}

.pages { height: 87px; }
.filters { height: 112px; margin-top: 9px; }
.marks { height: 353px; margin-top: 10px; }

.mark-type {
    display: flex;
    align-items: center;
    height: 28px;
    margin-top: 9px;
    padding-left: 15px;
    border: 1px solid #cfcfcf;
    border-radius: 2px;
    font-size: 17px;
    color: #555;
}

.mark-type span {
    flex: 1;
    height: 100%;
    margin-left: 6px;
    line-height: 26px;
    border-right: 1px solid #ddd;
}

.mark-type .caret {
    margin: 0 9px;
    border-top-color: #555;
}

.mark-grid {
    display: grid;
    grid-template-columns: repeat(3, 47px);
    grid-auto-rows: 63px;
    column-gap: 8.5px;
    row-gap: 9px;
    margin-top: 10px;
}

.mark-btn {
    display: flex;
    flex-direction: column;
    align-items: center;
    justify-content: space-between;
    padding: 10px 0 2px;
    border: 1px solid #d4d4d4;
    font-size: 15px;
    color: #1d2730;
}

.mark-pill-row {
    display: flex;
    align-items: center;
    height: 30px;
    padding-left: 13px;
    margin-top: 4px;
}

.mark-grid + .mark-pill-row {
    margin-top: 12px;
}

.mark-pill-row svg {
    width: 14px;
}

.mark-pill-row .pill {
    width: 115px;
    margin-left: 10px;
    padding-left: 16px;
    font-size: 20px;
}

.pill {
    display: flex;
    align-items: center;
    height: 30px;
    border-radius: 15px;
    font-size: 19.5px;
    color: #fff;
    white-space: nowrap;
}

.pill.blue { background-color: #4b96b5; }
.pill.green { background-color: #00b57f; }

.pill.wide {
    width: 222px;
    margin-left: 3px;
    padding-left: 16px;
}

/* shelves, view, legend */
.stage {
    flex: 1;
    display: flex;
    flex-direction: column;
    min-width: 0;
    margin-left: 8px;
    padding-right: 8px;
}

.shelf {
    flex: none;
    display: flex;
    align-items: center;
    height: 39px;
    margin-bottom: 9px;
    background-color: #fafafa;
    border: 1px solid #d4d4d4;
}

.shelf-label {
    display: flex;
    align-items: center;
    gap: 11px;
    width: 179px;
    height: 100%;
    padding-left: 10px;
    border-right: 1px solid #d8d8d8;
    color: #555;
}

.view-row {
    display: flex;
    gap: 8px;
    height: 702px;
}

.viz {
    flex: none;
    width: 1163px;
    background-color: #e7eff5;
    outline: 1px solid #d4d8dc;
    outline-offset: -1px;
}

.chart text {
    font-family: "Lato", "Open Sans", sans-serif;
}

.chart-title {
    font-size: 32px;
    font-weight: bold;
    fill: #2d2d2d;
}

.grid {
    fill: none;
    stroke: #f3f6f8;
    stroke-width: 1;
}

.zero {
    fill: none;
    stroke: #b0b4b8;
    stroke-dasharray: 1 2;
}

.ticks {
    stroke: #f3f6f8;
    stroke-width: 3;
    stroke-dasharray: 1 29.83;
}

.header-dots {
    stroke: #777;
    stroke-width: 2;
    stroke-dasharray: 2 28.83;
    stroke-dashoffset: -1;
}

.axis {
    font-size: 18.5px;
    fill: #7a8793;
}

.axis-title {
    font-size: 19px;
    font-weight: bold;
    fill: #444;
}

.mark-labels {
    font-size: 19px;
    fill: #222;
}

.legend {
    flex: 1;
    display: flex;
    flex-direction: column;
    min-width: 0;
    background-color: #fafafa;
    border: 1px solid #d4d8dc;
    overflow: hidden;
}

.legend h3 {
    flex: none;
    height: 42px;
    padding-left: 8px;
    font-size: 19px;
    line-height: 42px;
    color: #444;
}

.legend-body {
    flex: 1;
    display: flex;
    min-height: 0;
}

.legend-list {
    flex: none;
    width: 203px;
    margin: 0;
    padding: 0;
    list-style: none;
    background-color: #e7eff5;
    overflow: hidden;
}

.legend-list li {
    display: flex;
    align-items: center;
    height: 25px;
    padding-left: 5px;
    font-size: 19px;
    white-space: nowrap;
    color: #555;
}

.legend-list i {
    flex: none;
    width: 14px;
    height: 14px;
    margin-right: 7px;
}

.legend-track {
    flex: 1;
    margin-left: 1px;
    background-color: #f0f0f0;
}

.legend-thumb {
    width: 11px;
    height: 470px;
    margin: 26px 0 0 7px;
    background-color: #888;
}

/* sheet tabs */
.tabbar {
    flex: none;
    display: flex;
    height: 46px;
    background-color: #e4e4e4;
    border-top: 1px solid #d4d4d4;
    border-bottom: 1px solid #d4d4d4;
    overflow: hidden;
}

.tab {
    flex: none;
    display: flex;
    align-items: center;
    padding: 0 0 2px 9px;
    white-space: nowrap;
    overflow: hidden;
    border-right: 1px solid #d0d0d0;
    color: #5a5f65;
}

.tab svg {
    margin: 0 7px 0 4px;
}

.ds { width: 196px; padding-left: 8px; }
.t1 { width: 144px; }
.t2 { width: 190px; }
.t3 { width: 267px; }
.t4 { width: 300px; }
.t5 { width: 167px; }
.t6 { width: 138px; }
.t7 { width: 55px; }
.t8 { width: 238px; }
.t9 { width: 128px; }

.tab.on {
    background-color: #fafafa;
    font-size: 19.5px;
    font-weight: bold;
    color: #4f4f4f;
}

.tab-add {
    flex: 1;
    display: flex;
    align-items: center;
    justify-content: center;
    border-right: 1px solid #d0d0d0;
}

.statusbar {
    flex: none;
    display: flex;
    align-items: center;
    height: 30px;
    background-color: #e8e8e8;
    font-size: 16.8px;
    color: #2a2a2a;
}

.st-marks { width: 98px; padding-left: 4px; }
.st-dims { width: 174px; }
.st-sum { width: 1164px; }

.st-cell {
    flex: none;
    align-self: stretch;
    width: 1px;
    background-color: #cfcfcf;
}

.c-a { margin-right: 189px; }
.c-b { margin-right: 38px; }
.c-c { margin-right: 38px; }
.c-d { margin-right: 68px; }

.st-nav {
    display: flex;
    align-items: center;
    justify-content: space-between;
    width: 71px;
    padding: 0 8px;
}

.st-views {
    flex: 1;
    display: flex;
    align-items: center;
    gap: 12px;
    padding-left: 10px;
}

/* windows taskbar */
.taskbar {
    flex: none;
    position: relative;
    display: flex;
    align-items: center;
    height: 72px;
    color: #fff;
    background: linear-gradient(90deg, #1d1d1d 0, #1d1d1d 190px, #19222f 560px, #19222f 100%);
    border-top: 1px solid #3a3d42;
    font-family: "Roboto", sans-serif;
}

.weather {
    flex: none;
    position: relative;
    width: 202px;
    height: 72px;
    padding: 18px 0 0 14px;
}

.temp {
    position: absolute;
    left: 27px;
    top: 9px;
    padding: 2px 5px;
    border-radius: 11px;
    background-color: #2b2b2b;
    font-size: 17px;
}

.win-logo {
    margin-right: 22px;
}

.task-search {
    flex: none;
    display: flex;
    align-items: center;
    width: 326px;
    height: 44px;
    padding: 0 10px 0 15px;
    border-radius: 22px;
    background-color: #f0f2f4;
    font-family: "Open Sans", sans-serif;
    font-size: 20px;
    color: #555;
}

.task-search span {
    flex: 1;
    margin-left: 14px;
}

.apps {
    flex: none;
    display: flex;
    margin-left: 4px;
}

.app {
    position: relative;
    flex: none;
    display: flex;
    align-items: center;
    justify-content: center;
    width: 66.1px;
    height: 62px;
}

.app.current::before {
    content: "";
    position: absolute;
    inset: 2px 4px;
    border-radius: 6px;
    background-color: #283242;
}

.app.current svg {
    position: relative;
}

.badge {
    position: absolute;
    top: 5px;
    right: 7px;
    width: 24px;
    height: 24px;
    border-radius: 50%;
    background-color: #35a8e8;
    text-align: center;
    font-size: 15px;
    font-weight: normal;
    line-height: 24px;
    color: #12202e;
}

.chrome {
    width: 36px;
    height: 36px;
    border-radius: 50%;
    background:
        radial-gradient(circle, #2f7de1 0 7px, #fff 7.5px 9.5px, transparent 10px),
        conic-gradient(from 60deg, #f4c20d 0 120deg, #34a853 120deg 240deg, #e33b2e 240deg 360deg);
}

.dot {
    position: absolute;
    left: 50%;
    bottom: 3px;
    width: 9px;
    height: 5px;
    margin-left: -4.5px;
    border-radius: 3px;
    background-color: #8a8f96;
}

.dash {
    position: absolute;
    left: 50%;
    bottom: 3px;
    width: 24px;
    height: 5px;
    margin-left: -12px;
    border-radius: 3px;
    background-color: #35a8e8;
}

.tray {
    flex: 1;
    display: flex;
    align-items: center;
    height: 100%;
}

.tray-up { margin-left: 34px; }
.tray-drop { margin: 0 21px 0 31px; }

.tray > svg:nth-of-type(n + 3) {
    margin-right: 12px;
}

.lang {
    display: flex;
    flex-direction: column;
    align-items: center;
    gap: 2px;
    width: 46px;
    margin-right: 23px;
    font-size: 18px;
}

.clock {
    display: flex;
    flex-direction: column;
    align-items: flex-end;
    gap: 3px;
    width: 100px;
    margin-left: 5px;
    font-size: 18px;
}

.tray > .bell {
    margin: 0 0 0 14px;
}
```
